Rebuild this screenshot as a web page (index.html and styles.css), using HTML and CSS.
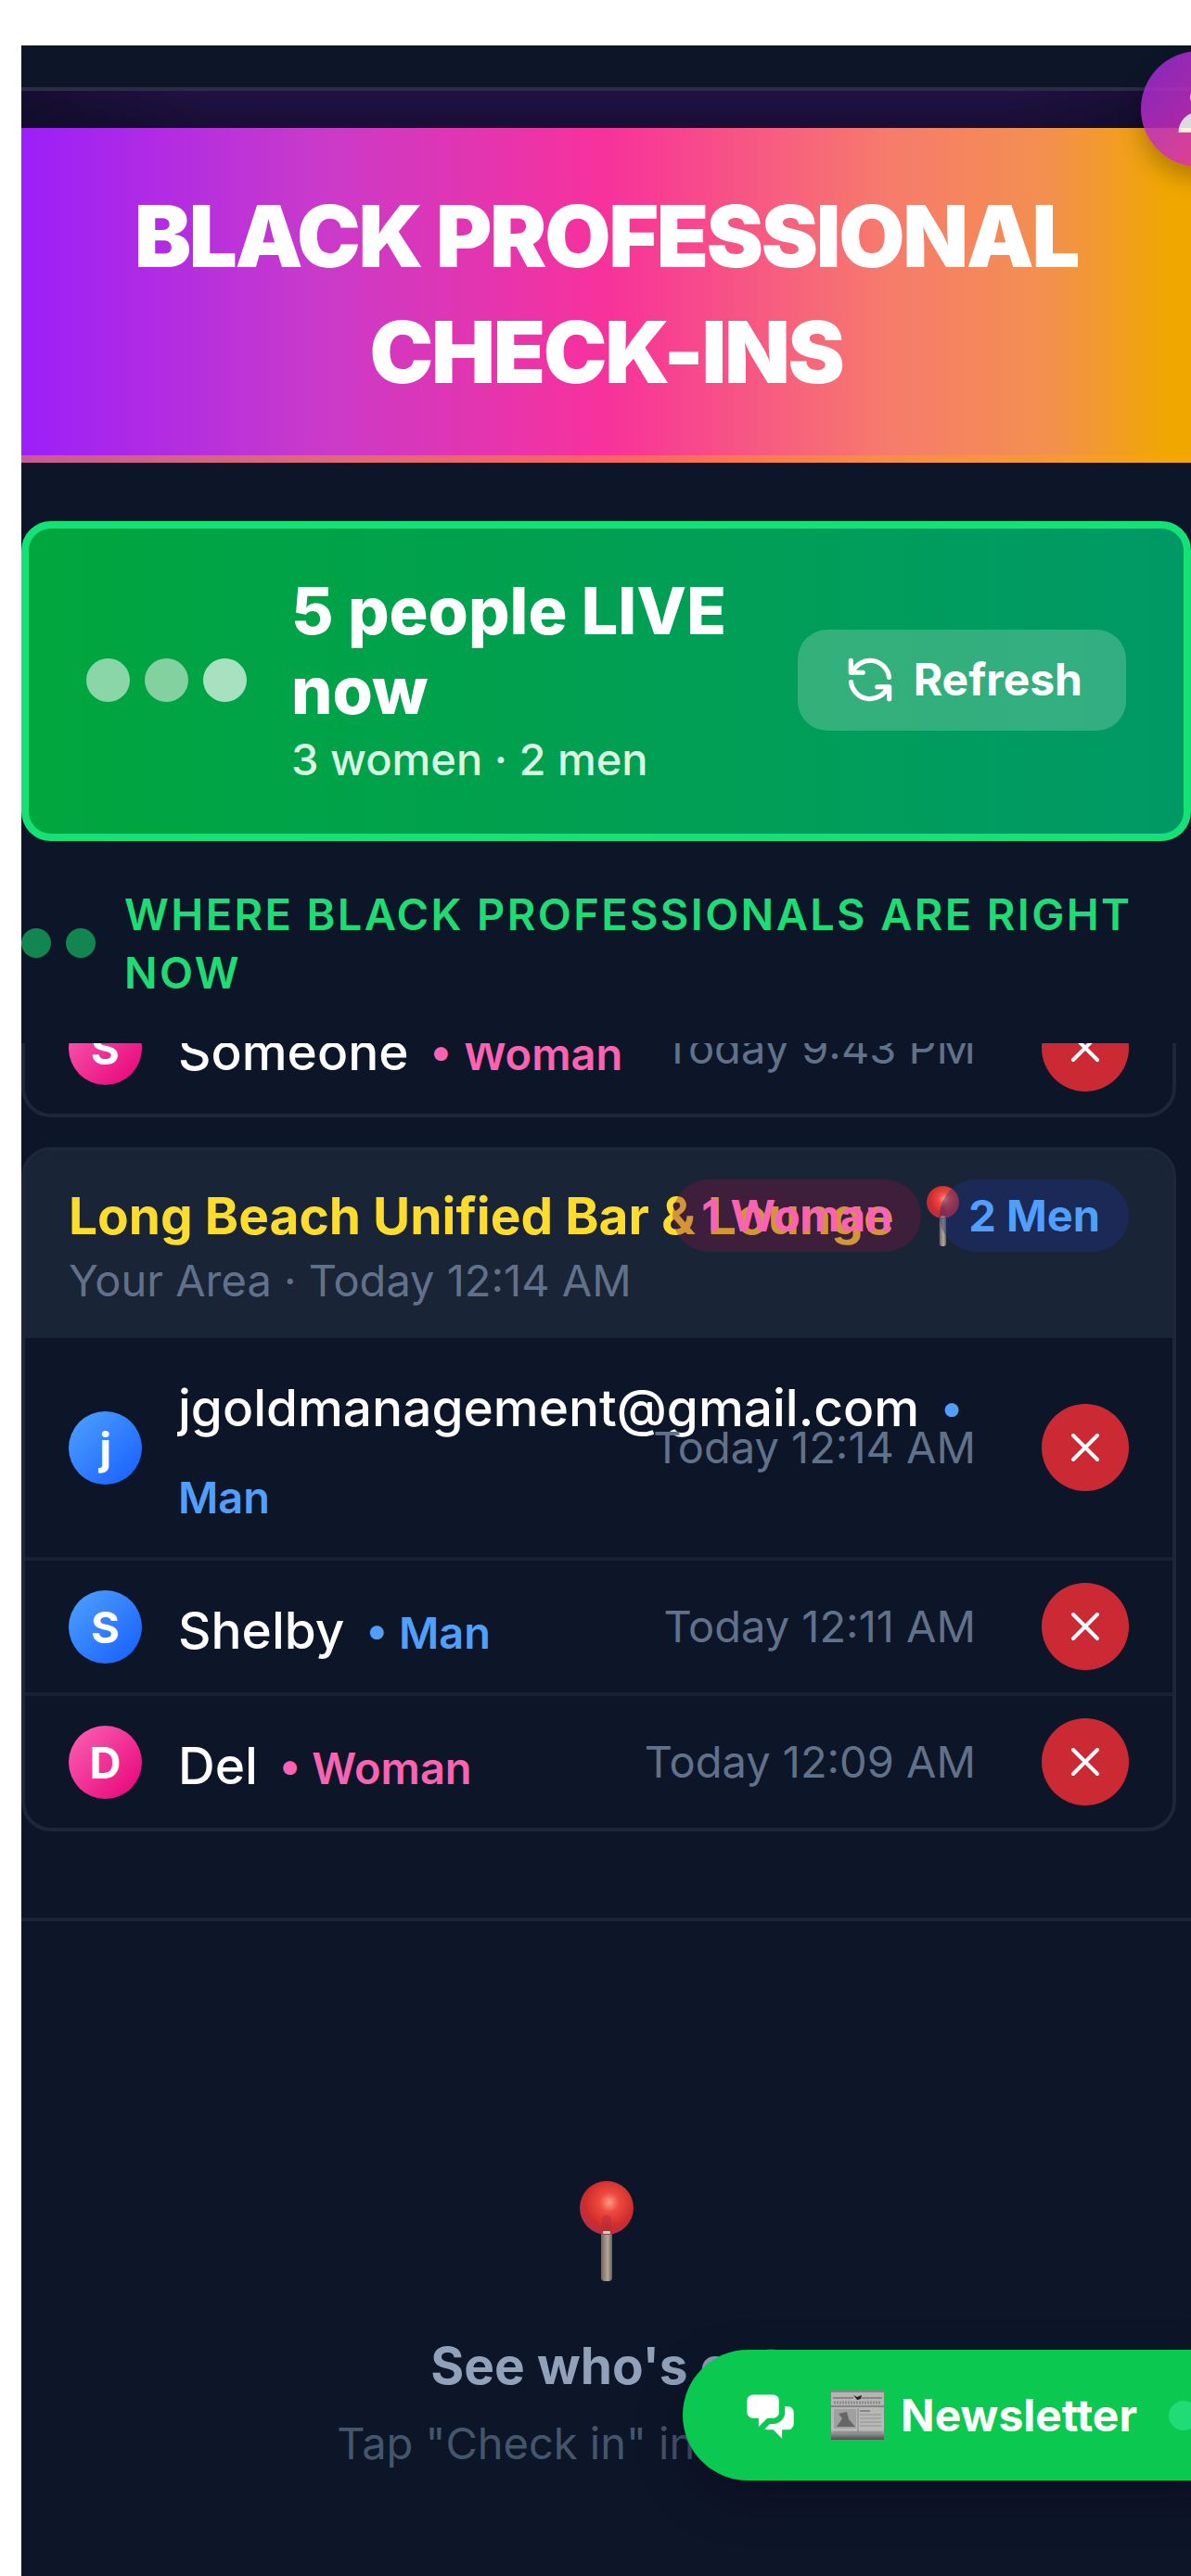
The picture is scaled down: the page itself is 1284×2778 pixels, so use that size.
FILE: index.html
```html
<!DOCTYPE html>
<html lang="en">
<head>
    <meta charset="UTF-8">
    <meta name="viewport" content="width=device-width, initial-scale=1.0">
    <title>Black Professional Check-Ins</title>
    <link rel="stylesheet" href="styles.css">
</head>
<body>
    <!-- shared icons -->
    <svg class="sprite" aria-hidden="true">
        <defs>
            <radialGradient id="pin-head" cx="0.55" cy="0.4" r="0.6">
                <stop offset="0" stop-color="#ff9a86"/>
                <stop offset="0.3" stop-color="#ee4a40"/>
                <stop offset="0.75" stop-color="#cf2b2c"/>
                <stop offset="1" stop-color="#b3304a"/>
            </radialGradient>
            <linearGradient id="pin-needle">
                <stop offset="0" stop-color="#6e665f"/>
                <stop offset="0.6" stop-color="#b5a79b"/>
                <stop offset="1" stop-color="#6b5c50"/>
            </linearGradient>
            <linearGradient id="paper" x2="0" y2="1">
                <stop offset="0" stop-color="#b4b4b4"/>
                <stop offset="0.8" stop-color="#b9b9b9"/>
                <stop offset="1" stop-color="#4c4c4c"/>
            </linearGradient>
        </defs>
        <symbol id="icon-pin" viewBox="0 0 58 108">
            <rect x="23" y="54" width="12" height="54" rx="4" fill="url(#pin-needle)"/>
            <circle cx="29" cy="29" r="29" fill="url(#pin-head)"/>
            <path d="M24 40q5-7 10 0v16H24z" fill="#b02a38" opacity="0.45"/>
            <rect x="25" y="54" width="8" height="3" rx="1" fill="#e6c3b8"/>
        </symbol>
        <symbol id="icon-close" viewBox="0 0 32 32">
            <path d="M3 3l26 26M29 3L3 29" fill="none" stroke="currentColor" stroke-width="4" stroke-linecap="round"/>
        </symbol>
    </svg>

    <div class="page">
        <div class="topbar"></div>
        <div class="glow"></div>
        <header class="banner">
            <h1>BLACK PROFESSIONAL CHECK-INS</h1>
        </header>

        <section class="live">
            <div class="live-dots"><span></span><span></span><span></span></div>
            <div class="live-text">
                <h2>5 people LIVE now</h2>
                <p>3 women · 2 men</p>
            </div>
            <button type="button" class="refresh">
                <svg viewBox="0 0 24 24" fill="none" stroke="currentColor" stroke-width="2" stroke-linecap="round" stroke-linejoin="round" aria-hidden="true"><path d="M4 4v5h.582m15.356 2A8.001 8.001 0 004.582 9m0 0H9m11 11v-5h-.581m0 0a8.003 8.003 0 01-15.357-2m15.357 2H15"/></svg>
                Refresh
            </button>
        </section>

        <div class="where">
            <div class="where-dots"><span></span><span></span></div>
            <h2>WHERE BLACK PROFESSIONALS ARE RIGHT NOW</h2>
        </div>

        <div class="venues">
            <div class="venue">
                <div class="person">
                    <span class="avatar woman">S</span>
                    <div class="name">Someone<span class="gender woman">• Woman</span></div>
                    <span class="time">Today 9:43 PM</span>
                    <button type="button" class="remove" aria-label="Remove Someone"><svg aria-hidden="true"><use href="#icon-close"/></svg></button>
                </div>
            </div>

            <div class="venue">
                <div class="venue-header">
                    <div class="venue-info">
                        <h3>Long Beach Unified Bar &amp; Lounge <svg class="pin" aria-hidden="true"><use href="#icon-pin"/></svg></h3>
                        <p>Your Area · Today 12:14 AM</p>
                    </div>
                    <div class="badges">
                        <span class="badge woman">1 Woman</span>
                        <span class="badge man">2 Men</span>
                    </div>
                </div>
                <div class="person">
                    <span class="avatar man">j</span>
                    <div class="name">jgoldmanagement@gmail.com<span class="gender man">• Man</span></div>
                    <span class="time">Today 12:14 AM</span>
                    <button type="button" class="remove" aria-label="Remove jgoldmanagement@gmail.com"><svg aria-hidden="true"><use href="#icon-close"/></svg></button>
                </div>
                <div class="person">
                    <span class="avatar man">S</span>
                    <div class="name">Shelby<span class="gender man">• Man</span></div>
                    <span class="time">Today 12:11 AM</span>
                    <button type="button" class="remove" aria-label="Remove Shelby"><svg aria-hidden="true"><use href="#icon-close"/></svg></button>
                </div>
                <div class="person">
                    <span class="avatar woman">D</span>
                    <div class="name">Del<span class="gender woman">• Woman</span></div>
                    <span class="time">Today 12:09 AM</span>
                    <button type="button" class="remove" aria-label="Remove Del"><svg aria-hidden="true"><use href="#icon-close"/></svg></button>
                </div>
            </div>
        </div>

        <section class="empty">
            <svg class="empty-pin" aria-hidden="true"><use href="#icon-pin"/></svg>
            <h2>See who's out</h2>
            <p>Tap "Check in" in the app.</p>
        </section>
    </div>

    <button type="button" class="profile" aria-label="Profile">
        <svg viewBox="0 0 20 20" fill="currentColor" aria-hidden="true"><path d="M10 9a3 3 0 100-6 3 3 0 000 6zm-7 9a7 7 0 1114 0H3z"/></svg>
    </button>

    <a href="#newsletter" class="newsletter">
        <svg class="chat" viewBox="0 0 20 20" fill="currentColor" aria-hidden="true">
            <path d="M2 5a2 2 0 012-2h7a2 2 0 012 2v4a2 2 0 01-2 2H9l-3 3v-3H4a2 2 0 01-2-2V5z"/>
            <path d="M15 7v2a4 4 0 01-4 4H9.828l-1.766 1.767c.28.149.599.233.938.233h2l3 3v-3h2a2 2 0 002-2V9a2 2 0 00-2-2h-1z"/>
        </svg>
        <span class="newsletter-label">
            <svg class="paper" viewBox="0 0 57 53" aria-hidden="true">
                <rect width="57" height="53" fill="url(#paper)"/>
                <path d="M0 1h57M2 8h22M33 8h22M0 17h57" stroke="#777" stroke-width="1.5"/>
                <path d="M3 13h51" stroke="#8a8a8a" stroke-width="3" stroke-dasharray="2 1"/>
                <path d="M24 5l4 2 5-2-1 4-4 1z" fill="#222"/>
                <rect x="3" y="20" width="24" height="21" fill="#a0a0a0"/>
                <path d="M6 39l6-9-4-5 9-2 2 8 7 8z" fill="#666"/>
                <path d="M31 22h11" stroke="#555" stroke-width="1"/>
                <path d="M31 26h23M31 30h23M31 34h23M31 38h23" stroke="#a4a4a4" stroke-width="2"/>
                <path d="M29 19v26M3 45h51" stroke="#858585"/>
            </svg>
            Newsletter
        </span>
        <span class="status"></span>
    </a>
</body>
</html>
```
FILE: styles.css
```css
* {
    box-sizing: border-box;
}
html {
    background: #fff;
}
body {
    position: relative;
    min-height: 100vh;
    margin: 0;
    padding: 49px 0 0 23px;
    overflow-x: hidden;
    display: flex;
    flex-direction: column;
    font-family: Inter, "Liberation Sans", sans-serif;
    font-size: 47px;
    line-height: 62px;
    color: #fff;
}
h1, h2, h3, p {
    margin: 0;
}
button {
    border: 0;
    padding: 0;
    font: inherit;
    color: inherit;
}
svg {
    display: block;
    flex: none;
}
.sprite {
    position: absolute;
    width: 0;
    height: 0;
}
.page {
    flex: 1;
    background: #0d1628;
}

/* header */
.topbar {
    height: 49px;
    border-bottom: 4px solid #2a2d44;
}
.glow {
    height: 40px;
    background: linear-gradient(rgba(10, 10, 30, 0), rgba(10, 10, 30, 0.4)), linear-gradient(90deg, #150e30, #211144 16%, #211144 84%, #150e30);
}
.banner {
    padding: 54px 47px 49px;
    border-bottom: 8px solid rgba(252, 165, 20, 0.45);
    background: linear-gradient(90deg, #9c1ff8, #c83acb 25%, #f8319b 50%, #f67b6c 74%, #f3904f 88%, #f0a700 98%);
    text-align: center;
}
.banner h1 {
    font-size: 92px;
    line-height: 125px;
    font-weight: 900;
    letter-spacing: -0.025em;
}

/* live card */
.live {
    display: flex;
    align-items: center;
    gap: 48px;
    margin-top: 63px;
    padding: 46px 62px 49px;
    border: 8px solid #15e276;
    border-radius: 32px;
    background: linear-gradient(90deg, #00a63e, #009966);
}
.live-dots, .where-dots {
    display: flex;
    gap: 16px;
}
.live-dots span {
    width: 47px;
    height: 47px;
    border-radius: 50%;
    background: #8bd6a8;
}
.live-dots span:nth-child(2) {
    background: #82d19f;
}
.live-dots span:nth-child(3) {
    background: #a8e1bf;
}
.live-text {
    flex: 1;
}
.live-text h2 {
    font-size: 70px;
    line-height: 86px;
    font-weight: 800;
}
.live-text p {
    font-weight: 500;
    color: #d8f8e3;
}
.refresh {
    display: flex;
    align-items: center;
    gap: 16px;
    padding: 23px 47px 24px;
    border-radius: 32px;
    background: rgba(255, 255, 255, 0.2);
    font-size: 48px;
    font-weight: 700;
}
.refresh svg {
    width: 62px;
    height: 62px;
}

/* section title */
.where {
    display: flex;
    align-items: center;
    gap: 31px;
    padding: 47px 16px 45px 0;
}
.where-dots span {
    width: 32px;
    height: 32px;
    border-radius: 50%;
    background: #128550;
}
.where h2 {
    font-size: 47px;
    line-height: 63px;
    font-weight: 600;
    letter-spacing: 0.05em;
    color: #1fdb74;
}

/* venue list, scrolled to its end */
.venues {
    display: flex;
    flex-direction: column;
    justify-content: flex-end;
    gap: 32px;
    height: 850px;
    padding-right: 16px;
    overflow: hidden;
}
.venue {
    flex: none;
    border: 4px solid #1c273a;
    border-radius: 32px;
    overflow: hidden;
}
.venue-header {
    display: flex;
    align-items: flex-start;
    padding: 31px 47px;
    background: #1a2437;
}
.venue-info {
    flex: 1;
    min-width: 0;
    white-space: nowrap;
}
.venue-info h3 {
    font-size: 55px;
    line-height: 78px;
    font-weight: 700;
    color: #fddc2e;
}
.venue-info p {
    color: #62718a;
}
.pin {
    display: inline-block;
    width: 35px;
    height: 65px;
    margin-left: 22px;
    vertical-align: -13px;
}
.badges {
    display: flex;
    gap: 20px;
}
.badge {
    padding: 8px 31px;
    border-radius: 39px;
    font-weight: 700;
}
.badge.woman {
    background: rgba(130, 20, 70, 0.35);
    color: #f963b2;
}
.badge.man {
    background: rgba(28, 50, 130, 0.4);
    color: #519ffa;
}
.person {
    display: flex;
    align-items: center;
    padding: 20px 47px;
}
.person + .person {
    border-top: 4px solid #172134;
}
.avatar {
    flex: none;
    width: 79px;
    margin-right: 39px;
    border-radius: 50%;
    line-height: 79px;
    font-weight: 700;
    text-align: center;
}
.avatar.woman {
    background: linear-gradient(135deg, #fb64b6, #e60076);
}
.avatar.man {
    background: linear-gradient(135deg, #50a2ff, #155dfc);
}
.name {
    flex: 1;
    min-width: 0;
    padding-top: 8px;
    font-size: 55px;
    line-height: 94px;
    font-weight: 500;
}
.gender {
    margin-left: 23px;
    font-size: 47px;
    line-height: 1;
    font-weight: 600;
}
.gender.woman {
    color: #f963b2;
}
.gender.man {
    color: #519ffa;
}
.time {
    color: #62718a;
    white-space: nowrap;
}
.remove {
    display: grid;
    place-items: center;
    flex: none;
    width: 94px;
    height: 94px;
    margin-left: 71px;
    border-radius: 50%;
    background: #cb2a35;
}
.remove svg {
    width: 32px;
    height: 32px;
}

/* empty state */
.empty {
    margin-top: 93px;
    padding-top: 280px;
    border-top: 4px solid #1a2437;
    text-align: center;
}
.empty-pin {
    width: 58px;
    height: 108px;
    margin: 0 auto 52px;
}
.empty h2 {
    font-size: 55px;
    line-height: 78px;
    font-weight: 700;
    color: #90a1b9;
}
.empty p {
    margin-top: 14px;
    color: #45556c;
}

/* floating controls */
.profile {
    position: absolute;
    top: 55px;
    right: -71px;
    display: grid;
    place-items: center;
    width: 125px;
    height: 125px;
    border-radius: 50%;
    background: linear-gradient(135deg, #9a2bdc, #f0309a);
    opacity: 0.85;
    box-shadow: 0 12px 24px rgba(0, 0, 0, 0.3);
}
.profile svg {
    width: 63px;
    height: 63px;
}
.newsletter {
    position: absolute;
    right: -71px;
    bottom: 103px;
    display: flex;
    align-items: center;
    gap: 34px;
    padding: 39px 63px;
    border-radius: 71px;
    background: #0bc950;
    box-shadow: 0 20px 50px rgba(10, 0, 30, 0.4);
    color: #fff;
    font-size: 48px;
    font-weight: 700;
    text-decoration: none;
}
.newsletter .chat {
    width: 63px;
    height: 63px;
}
.newsletter-label {
    display: flex;
    align-items: center;
    gap: 18px;
}
.paper {
    width: 57px;
    height: 53px;
}
.status {
    width: 32px;
    height: 32px;
    border-radius: 50%;
    background: #1fdc76;
}
```
